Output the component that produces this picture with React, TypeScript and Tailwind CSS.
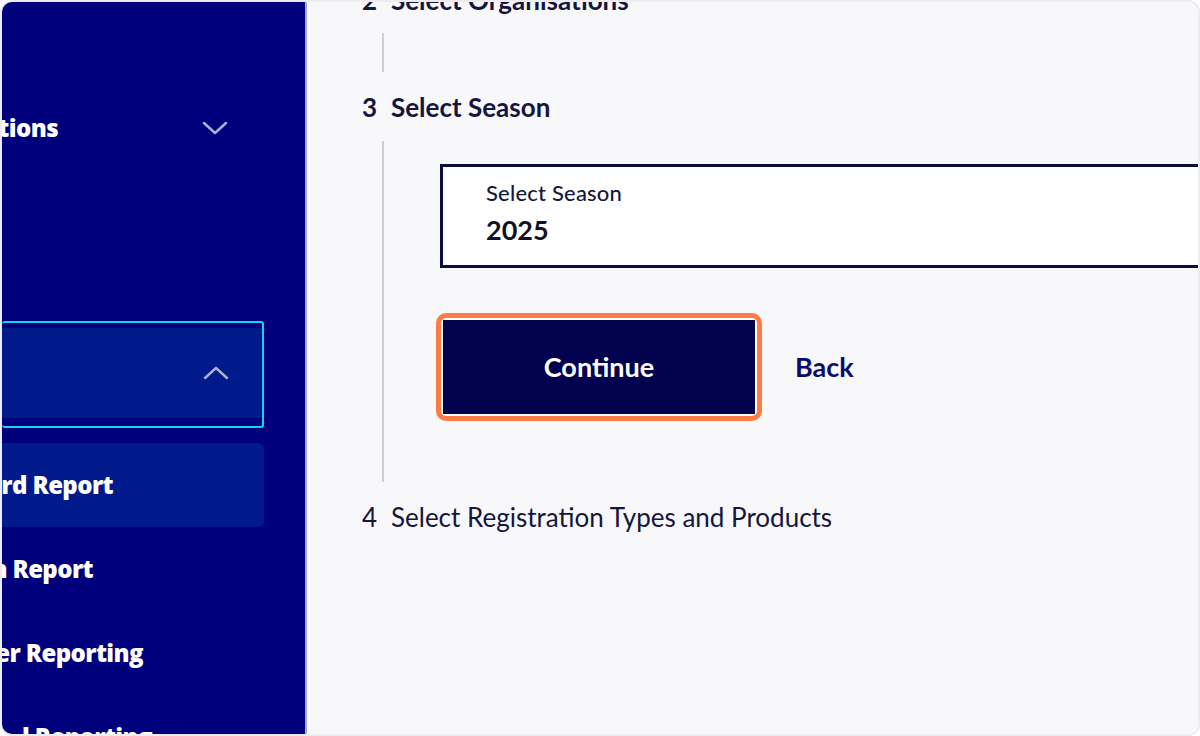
import React from 'react'

const ChevronDown = () => (
  <svg width="26" height="14" viewBox="0 0 26 14" fill="none">
    <polyline points="2,2 13,12 24,2" stroke="#aab0d6" strokeWidth="2.5" strokeLinecap="round" strokeLinejoin="round" />
  </svg>
)

const ChevronUp = () => (
  <svg width="26" height="14" viewBox="0 0 26 14" fill="none">
    <polyline points="2,12 13,2 24,12" stroke="#aab0d6" strokeWidth="2.5" strokeLinecap="round" strokeLinejoin="round" />
  </svg>
)

const bodyFont = { fontFamily: 'Lato, "Noto Sans", sans-serif' }
const navFont = { fontFamily: '"Open Sans", Lato, sans-serif' }

export default function App() {
  return (
    <div className="h-[736px] w-[1200px] bg-white" style={bodyFont}>
      <div className="flex h-full overflow-hidden rounded-[12px] border-2 border-[#ececf1]">
        {/* Sidebar, scrolled so the labels are clipped on the left */}
        <aside className="w-[305px] shrink-0 overflow-hidden border-r-2 border-[#a9a9c4] bg-[#00007c] text-white" style={navFont}>
          <div className="mt-[84px] flex h-[84px] items-center justify-between pr-[77px]">
            <div className="flex w-[56px] justify-end">
              <span className="whitespace-nowrap text-[24px] font-extrabold tracking-[-0.6px]">tions</span>
            </div>
            <ChevronDown />
          </div>

          {/* Focused group header */}
          <div className="mt-[151px] h-[107px] w-[262px] rounded-[3px] border-2 border-l-0 border-[#12d6ec] pb-[8px] pr-[1px] pt-[5px]">
            <div className="flex h-full items-center justify-end bg-[#001a8c] pr-[32px]">
              <ChevronUp />
            </div>
          </div>

          <div className="mt-[15px] flex flex-col">
            <div className="flex h-[84px] w-[262px] items-center rounded-r-[6px] bg-[#001a8c]">
              <div className="flex w-[111px] justify-end">
                <span className="whitespace-nowrap text-[24px] font-extrabold tracking-[-0.6px]">rd Report</span>
              </div>
            </div>
            <div className="flex h-[84px] items-center">
              <div className="flex w-[91px] justify-end">
                <span className="whitespace-nowrap text-[24px] font-extrabold tracking-[-0.6px]">n Report</span>
              </div>
            </div>
            <div className="flex h-[84px] items-center">
              <div className="flex w-[141px] justify-end">
                <span className="whitespace-nowrap text-[24px] font-extrabold tracking-[-0.6px]">er Reporting</span>
              </div>
            </div>
            <div className="flex h-[84px] items-center">
              <div className="flex w-[150px] justify-end">
                <span className="whitespace-nowrap text-[24px] font-extrabold tracking-[-0.6px]">l Reporting</span>
              </div>
            </div>
          </div>
        </aside>

        {/* Stepper content */}
        <main className="flex-1 overflow-hidden bg-[#f8f8fb] pl-[55px] text-[#15153d]">
          {/* Step 2 */}
          <div className="-mt-[19px] flex h-[34px] items-center text-[26px] font-bold">
            <span className="w-[29px]">2</span>
            <span>Select Organisations</span>
          </div>
          <div className="ml-[20px] mt-[16px] h-[39px] border-l-2 border-[#cfcfd6]" />

          {/* Step 3 */}
          <div className="mt-[18px] flex h-[34px] items-center text-[26px] font-bold">
            <span className="w-[29px]">3</span>
            <span>Select Season</span>
          </div>
          <div className="ml-[20px] mt-[17px] border-l-2 border-[#cfcfd6] pb-[61px] pl-[56px] pt-[23px]">
            <div className="flex h-[104px] w-[820px] flex-col border-[3px] border-[#0d0d3d] bg-white pl-[43px] pt-[12px]">
              <span className="text-[22px] font-medium leading-[28px] tracking-[0.2px] text-[#17173a]">Select Season</span>
              <span className="mt-[8px] text-[27px] font-bold leading-[30px] text-[#111122]">2025</span>
            </div>

            <div className="mt-[45px] flex items-center">
              <div className="-ml-[4px] rounded-[10px] border-[5px] border-[#ff7a45] bg-white p-[2px]">
                <button className="flex h-[94px] w-[312px] items-center justify-center bg-[#02024f] text-[27px] font-bold text-white">
                  Continue
                </button>
              </div>
              <button className="ml-[33px] text-[27px] font-bold text-[#0b0b6e]">Back</button>
            </div>
          </div>

          {/* Step 4 */}
          <div className="mt-[18px] flex h-[34px] items-center text-[26px]">
            <span className="w-[29px]">4</span>
            <span>Select Registration Types and Products</span>
          </div>
        </main>
      </div>
    </div>
  )
}
